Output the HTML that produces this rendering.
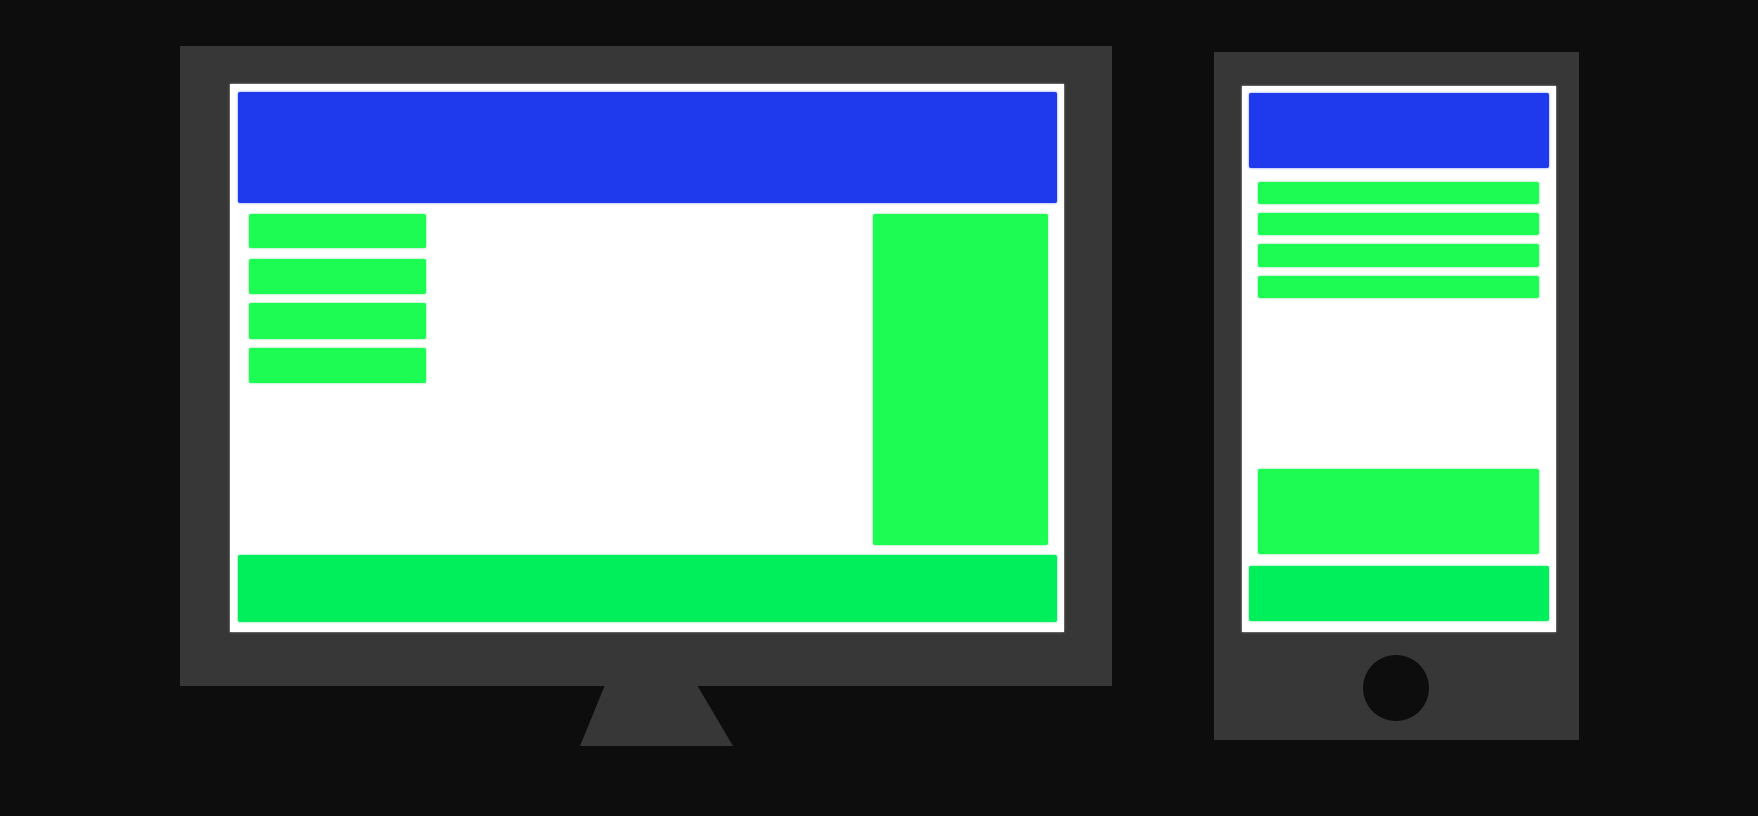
<!DOCTYPE html>
<html><head><meta charset="utf-8"><style>
html,body{margin:0;padding:0;width:1758px;height:816px;background:#0d0d0d;overflow:hidden;position:relative;font-family:"Liberation Sans",sans-serif}
div{position:absolute;box-sizing:border-box}
.f{background:#373737}
.s{background:#fff;box-shadow:0 0 2px #bbb}
.b{background:#1f3aed;border-radius:2px;box-shadow:0 0 2px rgba(31,58,237,.6)}
.g{background:#1dfc52;border-radius:2px;box-shadow:0 0 2px rgba(29,200,80,.6)}
.g2{background:#00ef5a;border-radius:2px;box-shadow:0 0 2px rgba(0,200,80,.6)}
</style></head><body>
<div class="f" style="left:180px;top:46px;width:932px;height:640px"></div>
<svg style="position:absolute;left:0;top:0" width="1758" height="816"><polygon points="605,685 697,685 733,746 580,746" fill="#373737"/></svg>
<div class="s" style="left:230px;top:84px;width:834px;height:548px"></div>
<div class="b" style="left:238px;top:92px;width:819px;height:111px"></div>
<div class="g" style="left:249px;top:214px;width:177px;height:34px"></div>
<div class="g" style="left:249px;top:259px;width:177px;height:35px"></div>
<div class="g" style="left:249px;top:303px;width:177px;height:36px"></div>
<div class="g" style="left:249px;top:348px;width:177px;height:35px"></div>
<div class="g" style="left:873px;top:214px;width:175px;height:331px"></div>
<div class="g2" style="left:238px;top:555px;width:819px;height:67px"></div>
<div class="f" style="left:1214px;top:52px;width:365px;height:688px"></div>
<svg style="position:absolute;left:0;top:0" width="1758" height="816"><circle cx="1396" cy="688" r="33" fill="#0d0d0d"/></svg>
<div class="s" style="left:1242px;top:86px;width:314px;height:546px"></div>
<div class="b" style="left:1249px;top:93px;width:300px;height:75px"></div>
<div class="g" style="left:1258px;top:182px;width:281px;height:22px"></div>
<div class="g" style="left:1258px;top:213px;width:281px;height:22px"></div>
<div class="g" style="left:1258px;top:244px;width:281px;height:23px"></div>
<div class="g" style="left:1258px;top:276px;width:281px;height:22px"></div>
<div class="g" style="left:1258px;top:469px;width:281px;height:85px"></div>
<div class="g2" style="left:1249px;top:566px;width:300px;height:55px"></div>
</body></html>
